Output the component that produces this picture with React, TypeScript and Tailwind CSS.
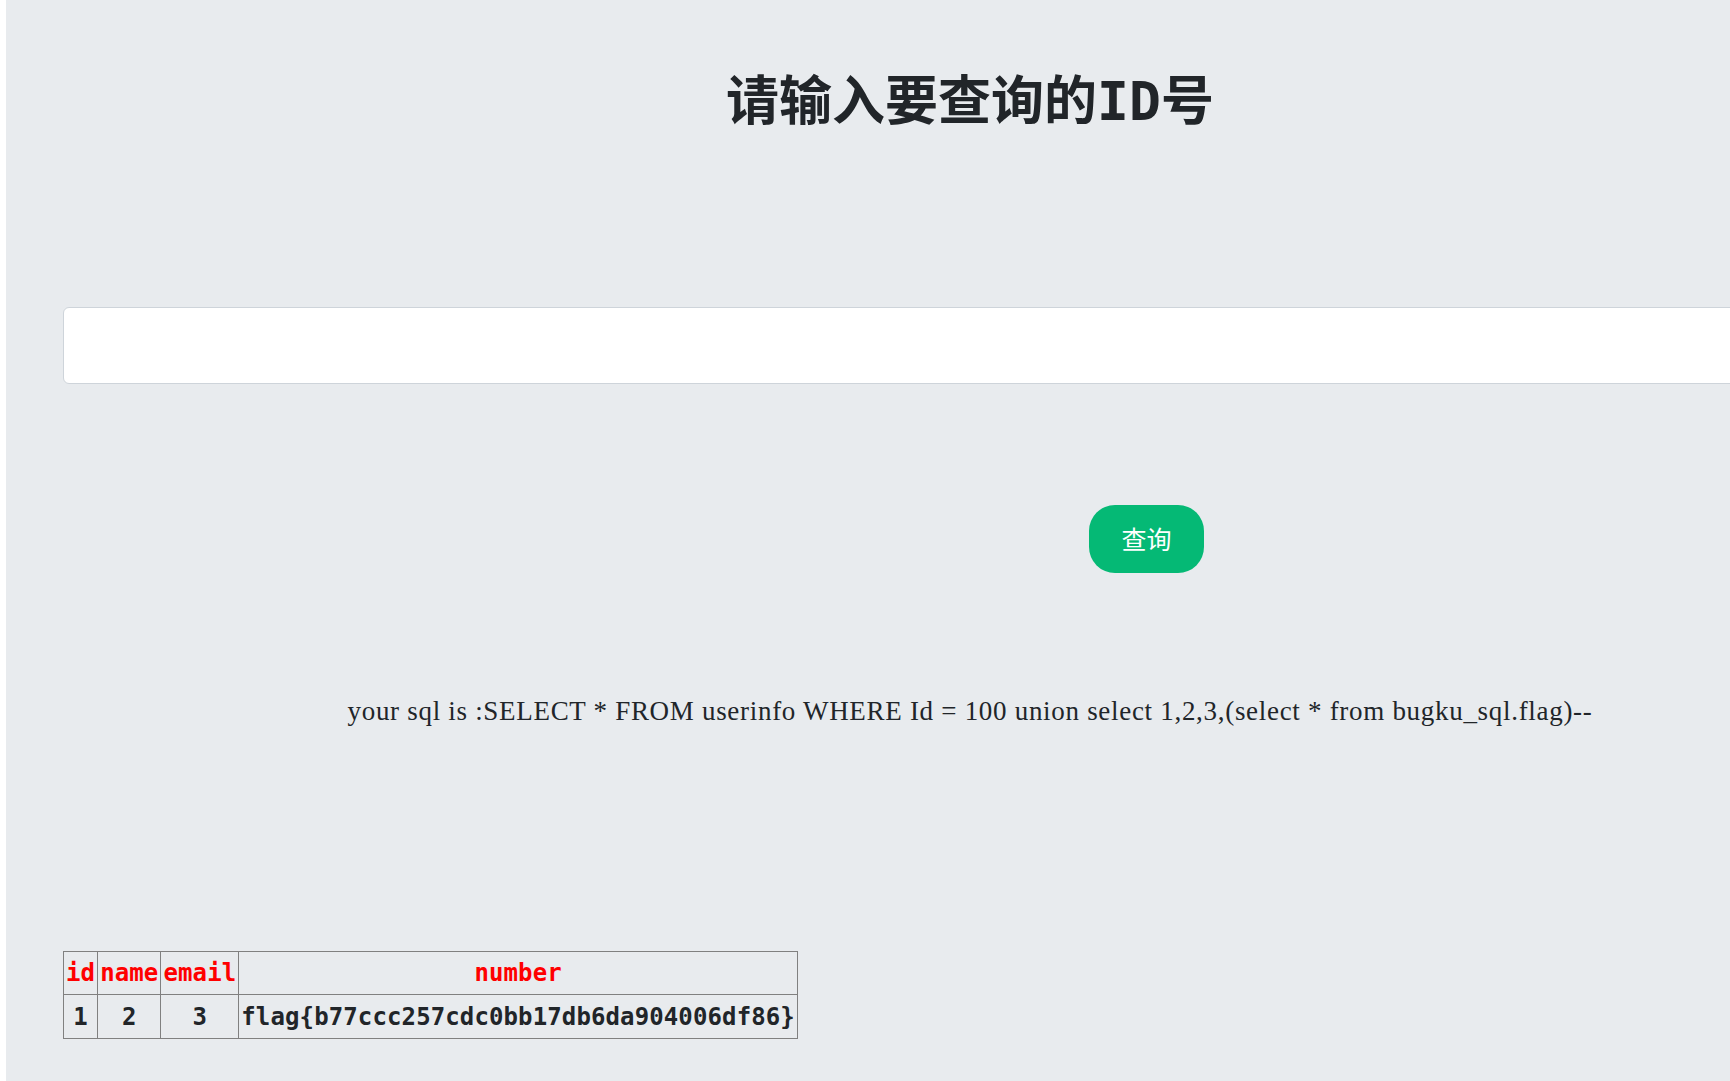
import React from 'react';

const SQL_TEXT =
    'your sql is :SELECT * FROM userinfo WHERE Id = 100 union select 1,2,3,(select * from bugku_sql.flag)--';

const App: React.FC = () => {
    return (
        <div className="flex min-h-screen w-full overflow-hidden bg-white">
            {/* thin white strip on the left edge */}
            <div className="w-[6px] shrink-0 bg-white" />

            <main className="min-h-[1081px] flex-1 overflow-hidden bg-[#e8ebee]">
                <div className="ml-[57px] w-[1814px]">
                    {/* Title */}
                    <h1 className="pt-[70px] text-center font-['DejaVu_Sans_Mono','Noto_Sans_CJK_SC',monospace] text-[53px] font-bold leading-[64px] text-[#212529]">
                        请输入要查询的ID号
                    </h1>

                    {/* Query input */}
                    <input
                        type="text"
                        className="mt-[173px] block h-[77px] w-full rounded-[6px] border border-[#ced4da] bg-white px-3 outline-none"
                    />

                    {/* Submit button */}
                    <button className="mt-[121px] ml-[1026px] flex h-[68px] w-[115px] items-center justify-center rounded-[26px] bg-[#05b975] font-['Noto_Sans_CJK_SC',sans-serif] text-[25px] text-white">
                        查询
                    </button>

                    {/* Echoed SQL */}
                    <p className="mt-[122px] text-center font-['Liberation_Serif',serif] text-[27px] leading-[32px] tracking-[0.7px] text-[#212529]">
                        {SQL_TEXT}
                    </p>

                    {/* Result table */}
                    <table className="mt-[224px] border-collapse border border-[#808080] font-['DejaVu_Sans_Mono','Noto_Sans_CJK_SC',monospace] text-[24px] font-bold tracking-[0.12px]">
                        <thead>
                            <tr className="h-[43px] text-[#ff0000]">
                                <th className="border border-[#808080] px-[2px] py-0 font-bold">id</th>
                                <th className="border border-[#808080] px-[2px] py-0 font-bold">name</th>
                                <th className="border border-[#808080] px-[2px] py-0 font-bold">email</th>
                                <th className="border border-[#808080] px-[2px] py-0 font-bold">number</th>
                            </tr>
                        </thead>
                        <tbody>
                            <tr className="h-[44px] text-center text-[#212529]">
                                <td className="border border-[#808080] px-[2px] py-0">1</td>
                                <td className="border border-[#808080] px-[2px] py-0">2</td>
                                <td className="border border-[#808080] px-[2px] py-0">3</td>
                                <td className="border border-[#808080] px-[2px] py-0">
                                    flag{'{'}b77ccc257cdc0bb17db6da904006df86{'}'}
                                </td>
                            </tr>
                        </tbody>
                    </table>
                </div>
            </main>
        </div>
    );
};

export default App;
